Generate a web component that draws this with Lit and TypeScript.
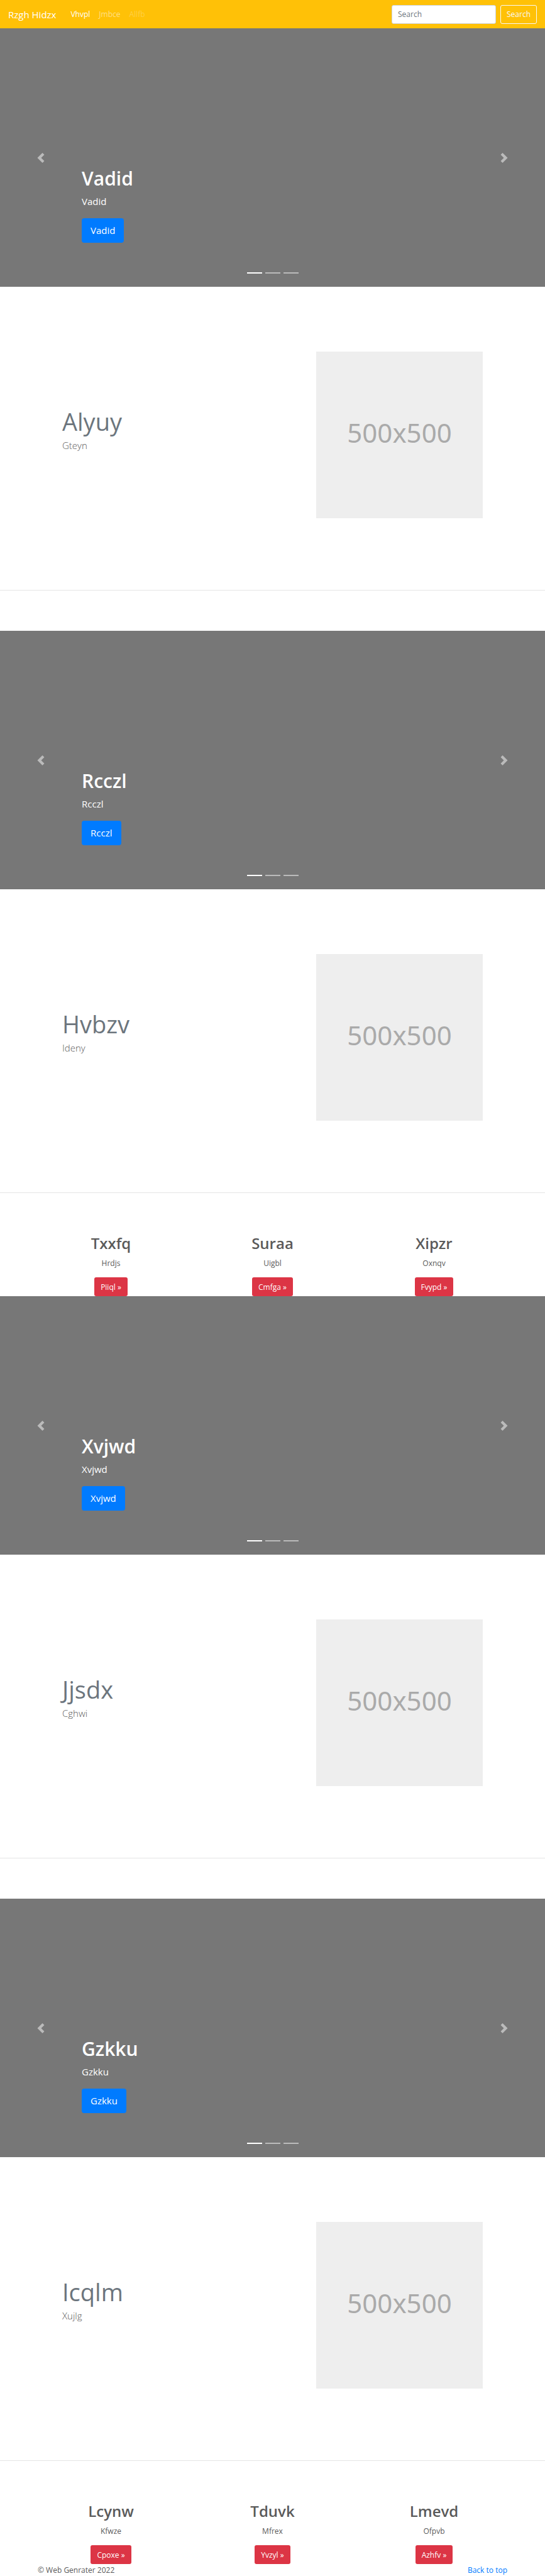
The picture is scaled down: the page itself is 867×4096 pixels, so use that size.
import { LitElement, html, css } from "lit";
import { customElement, property, state } from "lit/decorators.js";
import { classMap } from "lit/directives/class-map.js";

const reset = css`
  *, *::before, *::after { box-sizing: border-box; }
  h1, h2, p, ul { margin: 0; padding: 0; }
  button, input { font: inherit; }
  button { cursor: pointer; }
`;

@customElement("site-navbar")
class SiteNavbar extends LitElement {
  static styles = [reset, css`
    :host { display: block; }
    .navbar {
      display: flex;
      align-items: center;
      height: 45px;
      padding: 0 13px;
      background: #ffc107;
    }
    .brand { margin-right: 23px; color: #fff; font-size: 15px; line-height: 24px; text-decoration: none; }
    .links { display: flex; flex: 1; gap: 14px; list-style: none; }
    .link { color: rgba(255, 255, 255, 0.5); text-decoration: none; }
    .active { color: #fff; }
    .disabled { color: rgba(255, 255, 255, 0.25); }
    .search { display: flex; gap: 7px; }
    .field {
      width: 166px;
      height: 30px;
      padding: 0 9px;
      border: 1px solid #ced4da;
      border-radius: 3px;
      background: #fff;
      color: #495057;
    }
    .field::placeholder { color: #6c757d; opacity: 1; }
    .submit {
      height: 30px;
      padding: 0 9px;
      border: 1px solid #f8f9fa;
      border-radius: 3px;
      background: transparent;
      color: #f8f9fa;
    }
  `];

  render() {
    return html`
      <nav class="navbar">
        <a class="brand" href="#">Rzgh Hidzx</a>
        <ul class="links">
          <li><a class="link active" href="#">Vhvpl</a></li>
          <li><a class="link" href="#">Jmbce</a></li>
          <li><a class="link disabled" href="#" aria-disabled="true">Allfb</a></li>
        </ul>
        <form class="search" @submit=${(e: Event) => e.preventDefault()}>
          <input class="field" type="search" placeholder="Search" aria-label="Search" />
          <button class="submit" type="submit">Search</button>
        </form>
      </nav>
    `;
  }
}

@customElement("hero-carousel")
class HeroCarousel extends LitElement {
  @property() label = "";
  @state() private active = 0;

  static styles = [reset, css`
    :host { display: block; }
    .carousel {
      position: relative;
      display: grid;
      grid-template-columns: 15% 1fr 15%;
      height: 411px;
      background: #777;
      color: #fff;
    }
    .control {
      display: flex;
      align-items: center;
      justify-content: center;
      padding: 0;
      border: 0;
      background: none;
      color: #fff;
      opacity: 0.5;
    }
    .icon { width: 16px; height: 16px; fill: currentColor; }
    .caption {
      display: flex;
      flex-direction: column;
      align-items: flex-start;
      justify-content: flex-end;
      padding-bottom: 70px;
    }
    .title { margin-bottom: 6px; font-size: 30px; font-weight: 600; line-height: 36px; }
    .text { margin-bottom: 15px; font-size: 15px; line-height: 24px; }
    .action {
      height: 39px;
      padding: 0 14px;
      border: 0;
      border-radius: 4px;
      background: #007bff;
      color: #fff;
      font-size: 15px;
    }
    .indicators {
      position: absolute;
      right: 15%;
      bottom: 21px;
      left: 15%;
      display: flex;
      justify-content: center;
      gap: 5px;
    }
    .indicator { width: 24px; height: 2px; padding: 0; border: 0; background: #fff; opacity: 0.5; }
    .current { opacity: 1; }
  `];

  private go(index: number) {
    this.active = (index + 3) % 3;
  }

  render() {
    return html`
      <section class="carousel">
        <button class="control" aria-label="Previous" @click=${() => this.go(this.active - 1)}>
          <svg class="icon" viewBox="0 0 8 8"><path d="M5.25 0l-4 4 4 4 1.5-1.5L4.25 4l2.5-2.5L5.25 0z" /></svg>
        </button>
        <div class="caption">
          <h1 class="title">${this.label}</h1>
          <p class="text">${this.label}</p>
          <button class="action">${this.label}</button>
        </div>
        <button class="control" aria-label="Next" @click=${() => this.go(this.active + 1)}>
          <svg class="icon" viewBox="0 0 8 8"><path d="M2.75 0l-1.5 1.5L3.75 4l-2.5 2.5L2.75 8l4-4-4-4z" /></svg>
        </button>
        <div class="indicators">
          ${[0, 1, 2].map((i) => html`
            <button
              class=${classMap({ indicator: true, current: i === this.active })}
              aria-label="Slide ${i + 1}"
              @click=${() => this.go(i)}
            ></button>
          `)}
        </div>
      </section>
    `;
  }
}

@customElement("feature-row")
class FeatureRow extends LitElement {
  @property() heading = "";
  @property() text = "";

  static styles = [reset, css`
    :host { display: block; }
    .row {
      display: flex;
      align-items: center;
      justify-content: space-between;
      padding: 103px 99px 114px;
    }
    .copy { padding-bottom: 18px; }
    .heading { color: #6c757d; font-size: 38px; font-weight: 400; line-height: 50px; }
    .lead { font-size: 15px; font-weight: 300; line-height: 26px; }
    .picture {
      display: flex;
      align-items: center;
      justify-content: center;
      width: 265px;
      aspect-ratio: 1;
      padding-bottom: 8px;
      background: #eee;
      color: #aaa;
      font-family: "Noto Sans", sans-serif;
      font-size: 42px;
    }
    .divider { height: 1px; margin: 0 0 64px; border: 0; background: rgba(0, 0, 0, 0.1); }
  `];

  render() {
    return html`
      <section class="row">
        <div class="copy">
          <h2 class="heading">${this.heading}</h2>
          <p class="lead">${this.text}</p>
        </div>
        <div class="picture">500x500</div>
      </section>
      <hr class="divider" />
    `;
  }
}

interface Card {
  title: string;
  text: string;
  action: string;
}

@customElement("card-row")
class CardRow extends LitElement {
  @property({ attribute: false }) cards: Card[] = [];

  static styles = [reset, css`
    :host { display: block; }
    .cards {
      display: grid;
      grid-template-columns: repeat(3, 1fr);
      padding: 0 48px;
    }
    .card { display: flex; flex-direction: column; align-items: center; }
    .title { margin-bottom: 6px; font-size: 24px; font-weight: 600; line-height: 32px; }
    .text { margin-bottom: 12px; line-height: 20px; }
    .action {
      height: 30px;
      padding: 0 10px;
      border: 0;
      border-radius: 3px;
      background: #dc3545;
      color: #fff;
    }
  `];

  render() {
    return html`
      <section class="cards">
        ${this.cards.map((card) => html`
          <article class="card">
            <h2 class="title">${card.title}</h2>
            <p class="text">${card.text}</p>
            <button class="action">${card.action} »</button>
          </article>
        `)}
      </section>
    `;
  }
}

const firstCards: Card[] = [
  { title: "Txxfq", text: "Hrdjs", action: "Piiql" },
  { title: "Suraa", text: "Uigbl", action: "Cmfga" },
  { title: "Xipzr", text: "Oxnqv", action: "Fvypd" },
];

const secondCards: Card[] = [
  { title: "Lcynw", text: "Kfwze", action: "Cpoxe" },
  { title: "Tduvk", text: "Mfrex", action: "Yvzyl" },
  { title: "Lmevd", text: "Ofpvb", action: "Azhfv" },
];

@customElement("app-root")
class AppRoot extends LitElement {
  static styles = [reset, css`
    :host {
      display: block;
      background: #fff;
      color: #5a5a5a;
      font-family: "Open Sans", "Noto Sans", sans-serif;
      font-size: 12px;
      line-height: 19px;
    }
    .footer { display: flex; justify-content: space-between; padding: 0 60px; }
    .top { color: #007bff; text-decoration: none; }
  `];

  render() {
    return html`
      <site-navbar></site-navbar>
      <main>
        <hero-carousel label="Vadid"></hero-carousel>
        <feature-row heading="Alyuy" text="Gteyn"></feature-row>
        <hero-carousel label="Rcczl"></hero-carousel>
        <feature-row heading="Hvbzv" text="Ideny"></feature-row>
        <card-row .cards=${firstCards}></card-row>
        <hero-carousel label="Xvjwd"></hero-carousel>
        <feature-row heading="Jjsdx" text="Cghwi"></feature-row>
        <hero-carousel label="Gzkku"></hero-carousel>
        <feature-row heading="Icqlm" text="Xujlg"></feature-row>
        <card-row .cards=${secondCards}></card-row>
      </main>
      <footer class="footer">
        <p>© Web Genrater 2022</p>
        <a class="top" href="#">Back to top</a>
      </footer>
    `;
  }
}
